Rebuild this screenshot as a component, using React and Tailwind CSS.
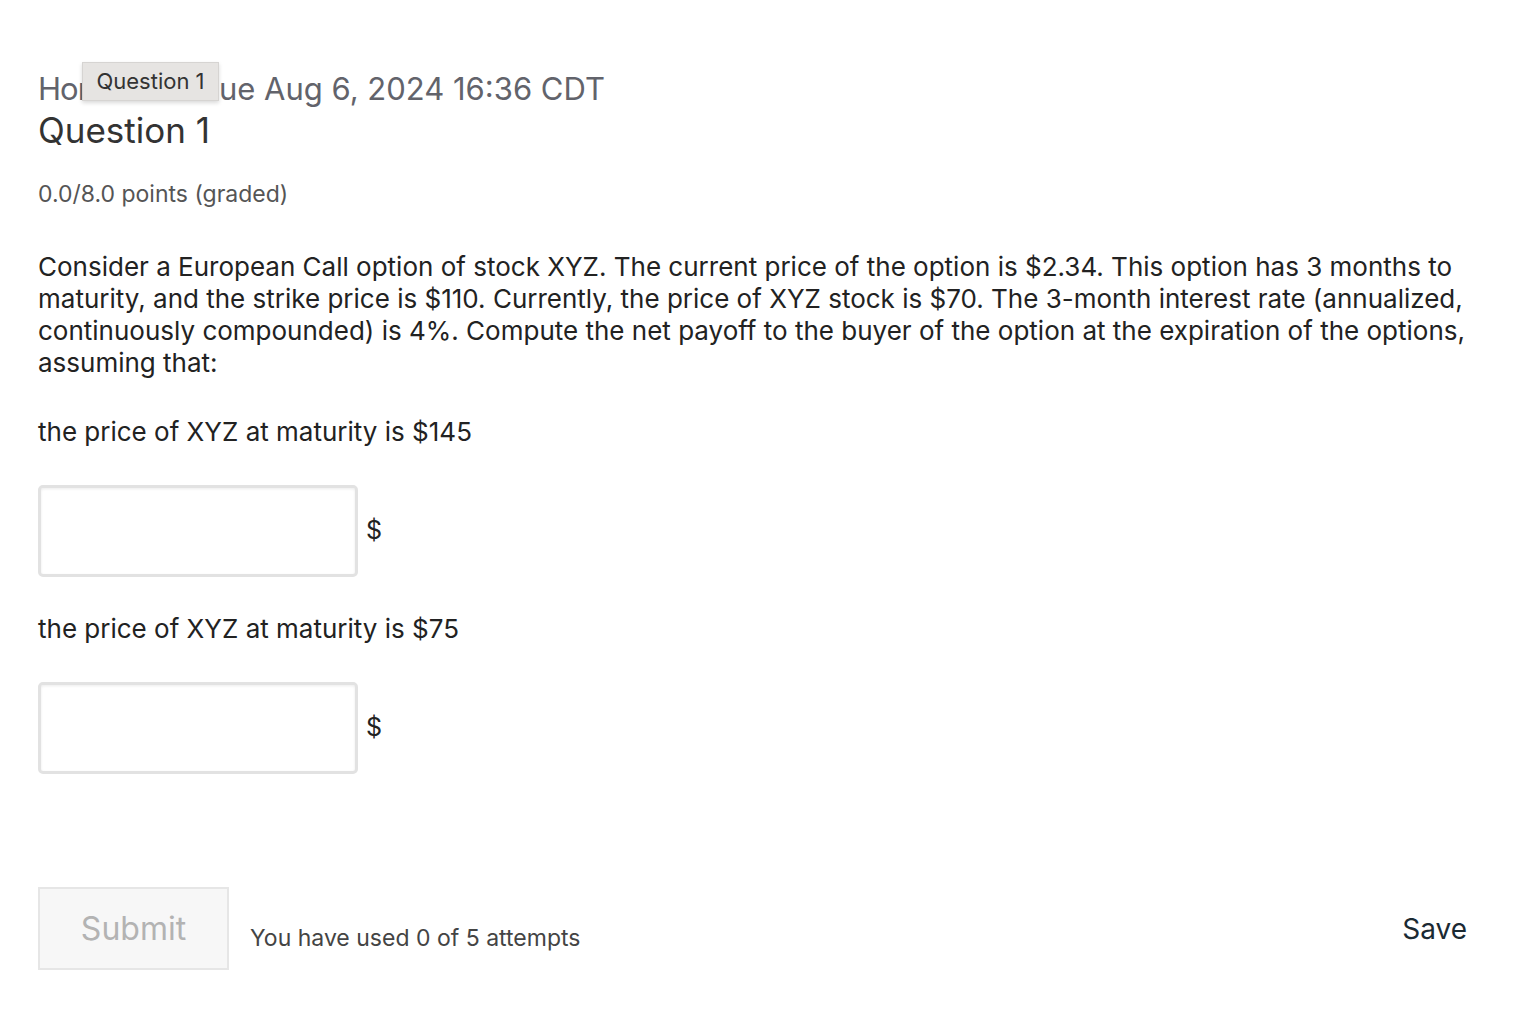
import { useState } from 'react';

const font = { fontFamily: 'Inter, "Noto Sans", sans-serif' };

function AnswerBox({ label }) {
  const [value, setValue] = useState('');
  return (
    <div>
      <p className="text-[26px] leading-[32px] text-[#222]">{label}</p>
      <div className="mt-[37px] flex items-center">
        <input
          value={value}
          onChange={(e) => setValue(e.target.value)}
          className="w-[320px] h-[92px] rounded-[5px] border-[3px] border-[#e2e2e2] bg-white shadow-[inset_0_1px_3px_rgba(0,0,0,0.08)] outline-none px-3 text-[24px]"
        />
        <span className="ml-[8px] text-[25px] text-[#222]">$</span>
      </div>
    </div>
  );
}

export default function App() {
  return (
    <div className="min-h-screen bg-white" style={font}>
      <div className="pl-[38px] pr-[68px] pt-[70px]">
        {/* Header with hover tooltip */}
        <div className="relative">
          <h2 className="text-[31px] leading-[38px] text-[#62636b] whitespace-nowrap">
            <span className="tracking-[-1px]">Homework </span>Due Aug 6, 2024 16:36 CDT
          </h2>
          <div className="absolute left-[44px] top-[-8px] w-[137px] h-[39px] flex items-center justify-center bg-[#e6e4e2] border border-[#d6d4d2] shadow-[0_2px_4px_rgba(0,0,0,0.15)] text-[22px] text-[#333]">
            Question 1
          </div>
        </div>
        <h1 className="mt-[2px] text-[35px] leading-[40px] text-[#333]">Question 1</h1>
        <p className="mt-[30px] text-[23px] leading-[28px] text-[#555]">0.0/8.0 points (graded)</p>

        <p className="mt-[43px] text-[26px] leading-[32px] text-[#222]">
          Consider a European Call option of stock XYZ. The current price of the option is $2.34. This option has 3 months to maturity, and the strike price is $110. Currently, the price of XYZ stock is $70. The 3-month interest rate (annualized, continuously compounded) is 4%. Compute the net payoff to the buyer of the option at the expiration of the options, assuming that:
        </p>

        <div className="mt-[37px]">
          <AnswerBox label="the price of XYZ at maturity is $145" />
        </div>
        <div className="mt-[36px]">
          <AnswerBox label="the price of XYZ at maturity is $75" />
        </div>

        <div className="mt-[113px] flex items-center justify-between">
          <div className="flex items-center">
            <button
              disabled
              className="w-[191px] h-[83px] bg-[#f7f7f7] border-2 border-[#e6e6e6] text-[32px] text-[#b3b3b3]"
            >
              Submit
            </button>
            <span className="ml-[21px] mt-[20px] text-[23px] text-[#444]">You have used 0 of 5 attempts</span>
          </div>
          <button className="text-[28px] text-[#1b2a33] mr-[1px]">Save</button>
        </div>
      </div>
    </div>
  );
}
